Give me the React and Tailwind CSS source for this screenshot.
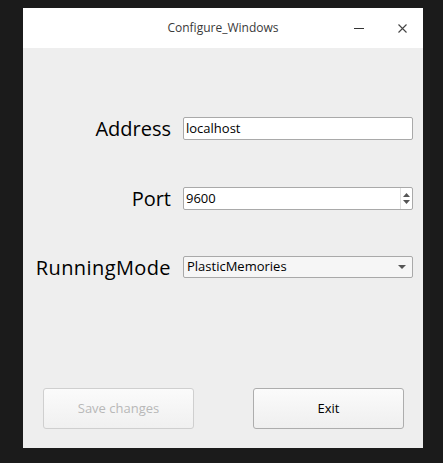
export default function App() {
  return (
    <div className="w-[443px] h-[463px] bg-[#1b1b1b] pt-[8px] pl-[23px]" style={{ fontFamily: '"Noto Sans", sans-serif' }}>
      <div className="w-[400px] h-[440px] flex flex-col bg-[#eeeeee]">
        <div className="h-[40px] bg-white grid grid-cols-[1fr_auto_1fr] items-center">
          <div />
          <div className="text-[12px] text-[#3a3a3a]" style={{ fontFamily: '"Open Sans", sans-serif' }}>Configure_Windows</div>
          <div className="flex justify-end items-center pr-[16px] gap-[34px]">
            <div className="w-[10px] h-[1px] bg-[#333]" />
            <svg width="9" height="9" viewBox="0 0 9 9" className="mt-[1px]">
              <path d="M0.5 0.5 L8.5 8.5 M8.5 0.5 L0.5 8.5" stroke="#444" strokeWidth="1.1" />
            </svg>
          </div>
        </div>
        <div className="flex-1 flex flex-col pt-[69px] pr-[10px]" style={{ fontFamily: '"Segoe UI", "Open Sans", sans-serif' }}>
          <div className="flex items-center h-[23px]">
            <div className="w-[148px] text-right text-[20px] text-black leading-none pt-[1px]">Address</div>
            <div className="ml-[12px] flex-1 h-[23px] bg-white border border-[#a9a9a9] rounded-[2px] flex items-center px-[2px] text-[13px] text-black">localhost</div>
          </div>
          <div className="flex items-center h-[23px] mt-[47px]">
            <div className="w-[148px] text-right text-[20px] text-black leading-none pt-[1px]">Port</div>
            <div className="ml-[12px] flex-1 h-[23px] bg-white border border-[#a9a9a9] rounded-[2px] flex items-center text-[13px] text-black">
              <span className="flex-1 px-[2px]">9600</span>
              <div className="w-[12px] h-full flex flex-col items-center justify-center gap-[3px] border-l border-[#e0e0e0]">
                <svg width="7" height="4" viewBox="0 0 7 4"><path d="M0 4 L3.5 0 L7 4 Z" fill="#555" /></svg>
                <svg width="7" height="4" viewBox="0 0 7 4"><path d="M0 0 L3.5 4 L7 0 Z" fill="#555" /></svg>
              </div>
            </div>
          </div>
          <div className="flex items-center h-[22px] mt-[46px]">
            <div className="w-[148px] text-right text-[20px] text-black leading-none pt-[1px] whitespace-nowrap tracking-[0.4px]">RunningMode</div>
            <div className="ml-[12px] flex-1 h-[22px] bg-[#f6f6f6] border border-[#a9a9a9] rounded-[2px] flex items-center text-[13px] text-black">
              <span className="flex-1 px-[3px]">PlasticMemories</span>
              <svg width="8" height="4" viewBox="0 0 8 4" className="mr-[6px]"><path d="M0 0 L4 4 L8 0 Z" fill="#555" /></svg>
            </div>
          </div>
          <div className="flex mt-[110px] pl-[20px] gap-[59px]">
            <button className="w-[151px] h-[41px] border border-[#cfcfcf] rounded-[3px] bg-gradient-to-b from-[#fbfbfb] to-[#f0f0f0] text-[13px] text-[#b8b8b8]">Save changes</button>
            <button className="w-[151px] h-[41px] border border-[#adadad] rounded-[3px] bg-gradient-to-b from-[#fbfbfb] to-[#efefef] text-[13px] text-black">Exit</button>
          </div>
        </div>
      </div>
    </div>
  );
}
